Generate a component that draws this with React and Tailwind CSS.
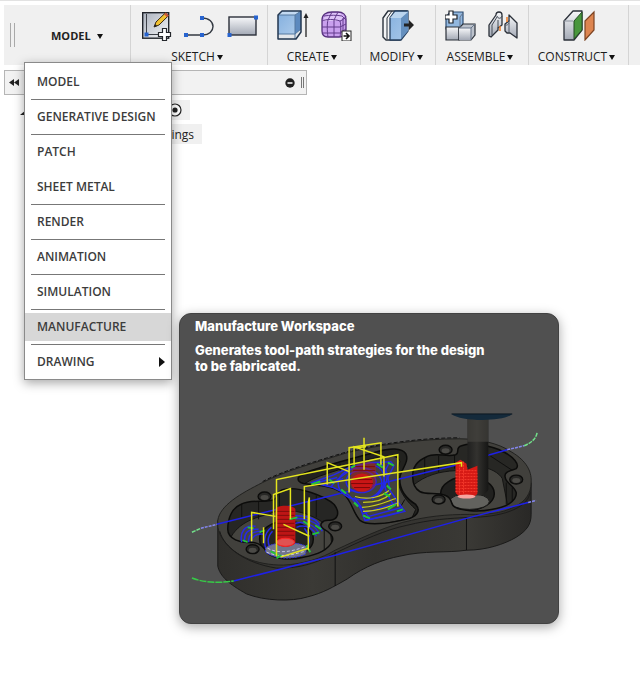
import React from "react";

const workspaces = [
  { name: "MODEL", line: true },
  { name: "GENERATIVE DESIGN", line: true },
  { name: "PATCH" },
  { name: "SHEET METAL", line: true },
  { name: "RENDER", line: true },
  { name: "ANIMATION", line: true },
  { name: "SIMULATION", line: true },
  { name: "MANUFACTURE", line: true, active: true },
  { name: "DRAWING", submenu: true },
];

function Icon({ children }) {
  return (
    <svg viewBox="0 0 32 32" className="h-8 w-8 shrink-0" aria-hidden="true">
      {children}
    </svg>
  );
}

function Gradients() {
  return (
    <svg className="absolute h-0 w-0" aria-hidden="true">
      <defs>
        <linearGradient id="steel" x1="0" y1="0" x2="0" y2="1">
          <stop offset="0" stopColor="#f7f8fa" />
          <stop offset="1" stopColor="#a3a9b5" />
        </linearGradient>
        <linearGradient id="sheet" x1="0" y1="0" x2="1" y2="1">
          <stop offset="0" stopColor="#aab1bd" />
          <stop offset="1" stopColor="#f4f5f7" />
        </linearGradient>
        <linearGradient id="sky" x1="0" y1="0" x2="1" y2="1">
          <stop offset="0" stopColor="#86b1df" />
          <stop offset="1" stopColor="#a9c8e9" />
        </linearGradient>
        <linearGradient id="side" x1="0" y1="0" x2="1" y2="0">
          <stop offset="0" stopColor="#2f2e2b" />
          <stop offset="0.3" stopColor="#3b3a36" />
          <stop offset="0.5" stopColor="#32312e" />
          <stop offset="0.8" stopColor="#3a3935" />
          <stop offset="1" stopColor="#292826" />
        </linearGradient>
        <linearGradient id="tool" x1="0" y1="0" x2="1" y2="0">
          <stop offset="0" stopColor="#20201f" />
          <stop offset="0.45" stopColor="#33322f" />
          <stop offset="1" stopColor="#161615" />
        </linearGradient>
      </defs>
    </svg>
  );
}

function NewSketchIcon() {
  return (
    <Icon>
      <rect x="2.7" y="3.7" width="26" height="25.5" fill="url(#sheet)" stroke="#20242b" strokeWidth="1.4" />
      <path d="M6.5 5v20.5H28" fill="none" stroke="#3b3f47" />
      <rect x="4.5" y="23.5" width="4" height="4" fill="#2563d0" />
      <path d="M14 18l2-5L25.5 3.8l3 2.8L19 16z" fill="#f2c230" stroke="#3a2a12" />
      <path d="M24 5.2l1.8-1.6 3 2.9-1.7 1.7z" fill="#c8583d" />
      <path d="M14 18l1.2-3 2 1.9z" fill="#222" />
      <path d="M22.5 19.5h4v4h4v4h-4v4h-4v-4h-4v-4h4z" fill="#fff" stroke="#24272c" strokeWidth="1.2" />
    </Icon>
  );
}

function LineIcon() {
  return (
    <Icon>
      <path d="M3 26h17c6 0 10-4 10-8.500S26 9 19 9" fill="none" stroke="#333942" strokeWidth="1.4" />
      <path d="M1 24h4v4H1zM17 24h4v4h-4zM17 7h4v4h-4z" fill="#2864cf" />
    </Icon>
  );
}

function RectangleIcon() {
  return (
    <Icon>
      <rect x="3" y="8" width="27" height="18" fill="url(#steel)" stroke="#2b3039" strokeWidth="1.4" />
      <path d="M1.500 24h4v4h-4zM28 6.500h4v4h-4z" fill="#2864cf" />
    </Icon>
  );
}

function ExtrudeIcon() {
  return (
    <Icon>
      <path d="M1 6l4-4h19v21l-5 8H1z" fill="#e3e6ea" />
      <path d="M1 6h17v19H1z" fill="url(#sky)" />
      <path d="M1 6l4-4h19l-6 4z" fill="#c3daf2" />
      <path d="M18 6l6-4v18l-6 5z" fill="#5c89be" />
      <path d="M1 25h17l6-5M1 6h17l6-4M18 6v24" fill="none" stroke="#55799f" />
      <path d="M1 30V6l4-4h19v21l-5 7z" fill="none" stroke="#22364f" strokeWidth="1.500" strokeLinejoin="round" />
      <path d="M29 28V8" stroke="#222" strokeWidth="1.300" />
      <path d="M29 4l2.500 5h-5z" fill="#222" />
    </Icon>
  );
}

function FormIcon() {
  return (
    <Icon>
      <path d="M2 11c0-5 4-8 10-8h6c5 0 8 3 8 7v11c0 5-3 7-7 7H8c-4 0-6-2-6-6z" fill="#c9a0ee" stroke="#55307c" strokeWidth="1.3" />
      <path d="M4 9c2-4 6-5 10-5h6l4 4-4 4H4z" fill="#dec4f8" />
      <path d="M2 12c4-2 13-2 18 0 3-1 5-3 6-5M2 18h18l6-3M2 24h18l6-4M8 28c-1-6-1-14 0-17l4-8M14 28V11l4-8M20 28c1-6 1-13 0-16M4 7c6-1 13-1 18 0l4 4M23 26V9" fill="none" stroke="#623b8c" />
      <rect x="22" y="22" width="9" height="10" fill="#fff" stroke="#252525" />
      <path d="M23.500 27h5M26 24l3 3-3 3" fill="none" stroke="#111" strokeWidth="1.600" />
    </Icon>
  );
}

function PressPullIcon() {
  return (
    <Icon>
      <path d="M1 9l5-7h19v8l-2 14-5 7H4l-3-3z" fill="#f4f5f6" stroke="#2a323c" strokeWidth="1.400" strokeLinejoin="round" />
      <path d="M5 30V9l5-7" fill="none" stroke="#2a323c" />
      <path d="M8 9l5-7h13v20l-7 9H8z" fill="url(#sky)" stroke="#27405f" strokeWidth="1.300" strokeLinejoin="round" />
      <path d="M19 9l7-7v20l-7 8z" fill="#648fbe" />
      <path d="M8 9l5-6h13l-7 6z" fill="#bad4ee" />
      <path d="M22 14.500h5V11l5 5-5 5v-3.500h-5z" fill="#222" />
    </Icon>
  );
}

function ComponentIcon() {
  return (
    <Icon>
      <path d="M1 8l4-5h13v14l-2 3H1z" fill="#91b7df" stroke="#2d4d73" strokeWidth="1.200" />
      <path d="M1 18h13v13H1z" fill="url(#steel)" stroke="#2b3039" strokeWidth="1.200" />
      <path d="M14 19l4-4h12v11l-4 5H14z" fill="#bcc2cc" stroke="#2b3039" strokeWidth="1.200" />
      <path d="M14 19h12v12H14z" fill="url(#steel)" />
      <path d="M14 19h12v12M26 19l4-4M15 8l3-4M15 8v10" fill="none" stroke="#66758a" />
      <path d="M4 2h4v4h4v4H8v4H4v-4H0V6h4z" fill="#fff" stroke="#20242a" strokeWidth="1.200" />
    </Icon>
  );
}

function JointIcon() {
  return (
    <Icon>
      <path d="M1 16l7-10c0-4 6-4 6 0v10l-4 3v2l-7 7-2-1z" fill="url(#steel)" stroke="#2b3039" strokeWidth="1.300" strokeLinejoin="round" />
      <path d="M4 26V16l5-8M9 7c1 3 4 3 5 0M10 19v-8" fill="none" stroke="#434a55" />
      <path d="M17 15l4-3V6l8 8v15l-7-5h-3l-2-2z" fill="url(#steel)" stroke="#2b3039" strokeWidth="1.300" strokeLinejoin="round" />
      <path d="M21 23V11M17 15c1 2 3 1 4-1" fill="none" stroke="#535b68" />
      <path d="M12 17v5M19 8v5" stroke="#ee7b24" strokeWidth="1.500" />
    </Icon>
  );
}

function PlaneIcon() {
  return (
    <Icon>
      <path d="M1 12l9-10h9v19l-8 10H1z" fill="url(#steel)" stroke="#2b3039" strokeWidth="1.300" strokeLinejoin="round" />
      <path d="M11 12l8-9v18l-8 9z" fill="#49973d" stroke="#244d24" />
      <path d="M1 12h9" stroke="#8b929d" />
      <path d="M22 12l9-9v18l-9 10z" fill="#dd8550" stroke="#7c4322" strokeWidth="1.200" />
    </Icon>
  );
}

const groups = [
  { name: "SKETCH", width: "w-[137px]", icons: [NewSketchIcon, LineIcon, RectangleIcon] },
  { name: "CREATE", width: "w-[93px]", icons: [ExtrudeIcon, FormIcon] },
  { name: "MODIFY", width: "w-[75px]", icons: [PressPullIcon] },
  { name: "ASSEMBLE", width: "w-[93px]", icons: [ComponentIcon, JointIcon] },
  { name: "CONSTRUCT", width: "w-[100px]", icons: [PlaneIcon] },
];

function Caret() {
  return (
    <svg viewBox="0 0 6 5" className="h-[5px] w-[6px]" aria-hidden="true">
      <path d="M0 0h6L3 5z" fill="#111" />
    </svg>
  );
}

function Toolbar() {
  return (
    <header className="ml-1 flex bg-[#f0f0f0]">
      <div className="flex w-[127px] shrink-0 items-center border-r border-[#d4d4d4] pl-1.5">
        <span className="h-6 w-[5px] border-x border-[#a9a9a9]" />
        <button type="button" aria-expanded="true" className="ml-9 flex items-center gap-1.5 pt-0.5 text-[11px] font-bold text-[#222]">
          MODEL <Caret />
        </button>
      </div>
      {groups.map((group) => (
        <section key={group.name} className={`${group.width} flex shrink-0 flex-col items-center border-r border-[#d4d4d4] pt-1`}>
          <div className="flex gap-[11px]">
            {group.icons.map((Glyph, i) => (
              <button key={i} type="button" aria-label={`${group.name} ${i + 1}`}>
                <Glyph />
              </button>
            ))}
          </div>
          <button type="button" className="mt-2 flex items-center gap-0.5 pr-1 text-[12px] leading-4 font-medium text-[#1c1c1c]">
            {group.name} <Caret />
          </button>
        </section>
      ))}
    </header>
  );
}

function Browser() {
  return (
    <aside className="mt-[5px] ml-1 w-[303px]">
      <div className="flex h-[25px] items-center border border-[#b5b5b5] bg-[#f2f2f2] pr-0.5 pl-1">
        <button type="button" aria-label="Collapse">
          <svg viewBox="0 0 10 7" className="h-[7px] w-[10px]">
            <path d="M5 0v7L0 3.500zM10 0v7L5 3.500z" fill="#222" />
          </svg>
        </button>
        <button type="button" aria-label="Minimize" className="ml-auto">
          <svg viewBox="0 0 10 10" className="h-[10px] w-[10px]">
            <circle cx="5" cy="5" r="4.700" fill="#222" />
            <path d="M2.500 5h5" stroke="#fff" strokeWidth="1.500" />
          </svg>
        </button>
        <span className="ml-1.5 h-[11px] w-[3px] border-x border-[#777]" />
      </div>
      <div className="mt-[5px] ml-4 flex h-5 items-center">
        <svg viewBox="0 0 6 6" className="mt-1.5 h-[6px] w-[6px]" aria-hidden="true">
          <path d="M6 0v5H0z" fill="#222" />
        </svg>
        <div className="ml-2 flex h-5 w-[156px] items-center justify-end bg-[#f0f0f0] pr-2">
          <svg viewBox="0 0 14 14" className="h-[14px] w-[14px]" aria-hidden="true">
            <circle cx="7" cy="7" r="6" fill="#fff" stroke="#222" strokeWidth="1.200" />
            <circle cx="7" cy="7" r="2.600" fill="#222" />
          </svg>
        </div>
      </div>
      <div className="mt-1 ml-[30px] flex h-5 w-[168px] items-center justify-end bg-[#f0f0f0] pt-0.5 pr-2 text-[12px] font-medium text-[#222]">
        ings
      </div>
    </aside>
  );
}

function WorkspaceMenu() {
  return (
    <nav className="absolute top-[62px] left-6 w-[148px] border border-[#8a8a8a] bg-white pt-[5px] pb-[3px] shadow-[0_3px_10px_rgba(0,0,0,0.35)]">
      {workspaces.map((item) => (
        <React.Fragment key={item.name}>
          <button
            type="button"
            className={`flex h-7 w-full items-center justify-between pr-1.5 pl-3 text-left text-[12px] font-semibold text-[#3c3c3c] ${item.active ? "bg-[#d7d7d7]" : ""}`}
          >
            {item.name}
            {item.submenu ? (
              <svg viewBox="0 0 6 10" className="h-[10px] w-[6px]" aria-hidden="true">
                <path d="M0 0l6 5-6 5z" fill="#111" />
              </svg>
            ) : null}
          </button>
          {item.submenu ? null : <div className={`mx-1.5 my-[3px] h-px ${item.line ? "bg-[#777]" : ""}`} />}
        </React.Fragment>
      ))}
    </nav>
  );
}

const holes = [
  [264, 497],
  [335, 527],
  [252, 550],
  [446, 450],
  [517, 480],
  [439, 500],
];

const leftPocket =
  "M227 530C227 518 232 508 240 505C250 500 260 503 270 501C280 500 274 492 283 490C298 486 325 497 334 505C340 513 338 520 330 521C322 520 317 526 324 530C330 533 334 538 332 542C328 551 315 556 303 558C287 562 272 559 266 553C263 547 258 543 250 543C240 544 227 540 227 530Z";
const middlePocket =
  "M298 478C301 473 320 468 340 462L377 452C390 448 402 448 406 454C410 462 401 470 400 478C399 492 408 500 416 505C422 512 416 518 406 520C390 524 367 527 360 521C353 514 352 502 344 495C334 486 317 486 303 484C299 483 297 481 298 478Z";
const rightPocket =
  "M413 478C412 466 420 460 427 457C436 452 447 458 456 455C461 453 455 448 462 446C472 442 493 446 504 452C514 457 521 465 517 469C512 471 504 472 506 478C506 483 515 486 517 493C518 502 506 508 492 510C478 513 461 511 456 508C450 506 454 499 446 496C438 492 427 496 420 492C415 489 413 484 413 478Z";

function ToolpathPicture() {
  return (
    <svg viewBox="179 400 380 220" className="block w-full" role="img" aria-label="Tool paths on a milled part">
      <clipPath id="leftClip"><path d={leftPocket} /></clipPath>
      <clipPath id="middleClip"><path d={middlePocket} /></clipPath>
      <clipPath id="rightClip"><path d={rightPocket} /></clipPath>

      {/* body */}
      <path
        d="M217 521V567C219 577 228 585 246 595C264 602 291 603 307 598C323 594 333 588 347 580C365 567 384 560 400 557C425 551 447 554 467 551C487 551 505 545 517 538C528 531 532 525 532 515V483L400 500Z"
        fill="url(#side)" stroke="#191918"
      />
      <path
        d="M217 521C219 506 240 494 262 483C285 471 315 463 347 453C380 445 420 439 460 439C480 439 500 444 510 451C525 459 533 470 532 483C532 494 526 502 516 507C501 515 487 515 470 515C446 515 427 517 403 523C379 530 361 539 335 551C322 559 303 565 283 566C254 566 237 556 228 547C220 539 216 531 217 521Z"
        fill="#41403c" stroke="#20201e"
      />
      <path d="M219 532C223 548 244 564 276 569C304 570 323 560 335 554C362 541 387 530 407 526C431 520 450 519 470 518C500 518 528 510 531 493" fill="none" stroke="#1b1b1a" />
      <path d="M335 553V587M467 518V551" stroke="#111" />
      <path d="M262 482C285 470 315 462 347 452C380 444 420 438 460 438" fill="none" stroke="#111" strokeDasharray="4 2" />

      {/* pockets */}
      <path d={leftPocket} fill="#262624" />
      <g clipPath="url(#leftClip)">
        <path d="M226 548C232 526 250 519 268 515C285 505 318 515 330 530L333 561H240Z" fill="#45443f" stroke="#151514" />
        <path d="M241 504V518M258 502V520M279 492V508M316 496V518M324 528V551" stroke="#11110f" />
        <ellipse cx="286" cy="540" rx="27" ry="18" fill="#232321" stroke="#0d0d0c" strokeWidth="1.500" />
      </g>
      <path d={leftPocket} fill="none" stroke="#0c0c0b" strokeWidth="1.500" />
      <path d={middlePocket} fill="#22221f" />
      <g clipPath="url(#middleClip)">
        <path d="M300 488C312 475 340 472 360 462C375 458 399 452 400 462C395 480 398 494 416 510L412 519L364 528L347 501C334 492 320 488 300 488Z" fill="#42413d" stroke="#11110f" />
        <path d="M340 464V472M405 500L401 507" stroke="#0d0d0c" />
      </g>
      <path d={middlePocket} fill="none" stroke="#0c0c0b" strokeWidth="1.500" />
      <path d={rightPocket} fill="#272724" />
      <g clipPath="url(#rightClip)">
        <path d="M412 487C426 475 440 472 456 471C470 462 496 467 503 479L510 514H440Z" fill="#45443f" stroke="#151514" />
        <path d="M425 458V475M439 456V473M455 455V469M507 483V505M513 488V503M480 449L518 474" stroke="#0f0f0e" />
        <ellipse cx="468" cy="494" rx="27" ry="17" fill="#21211f" stroke="#0d0d0c" strokeWidth="1.500" />
        <ellipse cx="470" cy="502" rx="20" ry="8" fill="#62625e" stroke="#1a1a19" />
      </g>
      <path d={rightPocket} fill="none" stroke="#0c0c0b" strokeWidth="1.500" />
      {holes.map(([cx, cy]) => (
        <g key={cx}>
          <ellipse cx={cx} cy={cy} rx="6.500" ry="4.500" fill="#282826" stroke="#0c0c0b" strokeWidth="1.400" />
          <ellipse cx={cx} cy={cy + 1} rx="4" ry="2.500" fill="#4b4a46" />
        </g>
      ))}

      {/* long linking moves */}
      <g fill="none" strokeWidth="1.500">
        <path d="M216 525L340 494L462 464M487 456L508 450M233 582L335 556L467 519L529 503" stroke="#1e20e8" />
        <path d="M200 529L216 525M508 450L525 446M529 503L537 501" stroke="#8587ef" strokeDasharray="3 1" />
        <path d="M191 533L200 529M525 446C532 443 537 439 538 433" stroke="#72e08a" strokeDasharray="4 1" />
        <path d="M191 579C204 584 219 584 233 582" stroke="#37c947" strokeDasharray="7 1" />
      </g>

      {/* middle pocket cuts */}
      <g fill="none" stroke="#2428ea" strokeWidth="1.500">
        <path d="M312 483L334 475L351 467L371 463L391 462L394 466L388 478L390 491L400 505L405 512L385 517L365 521L360 508L348 495L333 488Z" />
        <path d="M317 483L337 478M323 486L343 479M331 487C335 481 342 476 348 472M375 466C387 470 387 486 377 496" />
        <path d="M381 464C392 474 388 488 372 500M389 464C382 475 382 491 395 507M354 498L369 518M363 514L398 503M365 518L402 508M366 521L399 513" />
        <ellipse cx="361" cy="482" rx="15" ry="11" />
        <ellipse cx="360" cy="484" rx="22" ry="16" />
      </g>
      <path d="M363 503C377 503 386 499 391 494M362 508C379 507 389 501 396 499M363 512C378 512 390 507 397 504M355 497C369 501 382 497 389 491" fill="none" stroke="#c9cc1c" strokeWidth="1.200" />
      <path d="M352 469C354 464 376 459 376 466V483C374 496 350 496 350 483Z" fill="#c41616" fillOpacity="0.45" />
      <ellipse cx="362" cy="483" rx="11" ry="9" fill="#c91616" />
      <path d="M352 480H372M351 484H373M354 488H370M353 467H375M353 471H375" stroke="#7e0909" strokeWidth="1" />
      <path d="M311 485l9-3M329 480l5 4M351 468l4-2M377 464l6 4M388 463l6 3M341 490l5 4M354 503l4 4M363 516l7 3M388 510l8-5M397 512l6-2M387 486l4 4M384 494l6 3" stroke="#23c538" strokeWidth="2" />

      {/* left pocket cuts */}
      <g fill="none" stroke="#2629e5" strokeWidth="1.500">
        <path d="M241 543C239 533 244 525 255 527M244 543C243 534 247 529 258 530M248 543C247 536 251 532 261 532M251 542C251 538 255 534 263 535" />
        <path d="M288 521C302 516 319 523 322 532M292 525C303 520 316 526 319 535M296 528C306 524 314 530 316 537M286 517C302 515 315 518 319 525" />
        <path d="M268 553C261 545 264 533 271 528M273 552C265 545 267 537 272 532M304 529C314 542 308 551 294 556" />
      </g>
      <path d="M265 549C271 542 300 542 307 548L305 555C294 560 276 561 265 553Z" fill="#71748c" stroke="#3437dd" strokeDasharray="2 1" />
      <path d="M267 549C280 556 295 551 306 547M266 553C283 560 296 554 305 552" fill="none" stroke="#c7cae5" strokeDasharray="3 2" />
      <path d="M275 510C275 505 294 505 295 510V543C293 549 277 549 275 543Z" fill="#bd1515" />
      <path d="M276 512H294M276 516H294M276 520H294M276 524H294M276 528H294M276 532H294M276 536H294M276 540H294" stroke="#7e0d0d" />
      <ellipse cx="285" cy="543" rx="9" ry="4" fill="#e05252" stroke="#ff2525" />
      <path d="M247 528l6 1M259 533l5-2M242 541l5 2M289 520l8-2M303 522l6 4M315 526l6 4M312 535l7-2M306 546l4 7M270 552l8 4M276 559l5-3" stroke="#22c637" strokeWidth="1.800" />

      {/* cutter */}
      <path d="M468 419H489V490C486 498 471 498 468 490Z" fill="url(#tool)" />
      <path d="M468 419H489V442H468Z" fill="#464540" fillOpacity="0.65" />
      <path d="M452 414H513C505 422 461 422 452 414Z" fill="#142a3b" />
      <path d="M452 414H513" stroke="#0c1720" />
      <path d="M456 463L461 460L467 464L468 470L478 466V494C475 500 459 499 456 493Z" fill="#d61a15" />
      <path d="M457 471H478M456 474H478M456 477H478M456 480H478M456 483H478M456 486H478M456 489H478M456 492H478M460 462V496M464 462V495" stroke="#f43a2d" strokeDasharray="2 1" />
      <ellipse cx="467" cy="497" rx="9" ry="2" fill="#f7a39f" />

      {/* rapid moves */}
      <g fill="none" stroke="#e4e51e" strokeWidth="1.500">
        <path d="M276 557V480L398 455V507" />
        <path d="M304 520V487L462 463V467" />
        <path d="M327 485V463L349 472" />
        <path d="M349 493V448L381 443V465" />
        <path d="M354 465V447L384 457V477" />
        <path d="M364 438V470" />
        <path d="M251 542V513L275 517" />
        <path d="M273 530V495L290 489V520" />
        <path d="M308 551V503L309 498V528" />
        <path d="M283 525L309 537M263 528V544M280 558L308 549M354 448L366 447" />
      </g>
    </svg>
  );
}

function WorkspaceTooltip() {
  return (
    <div role="tooltip" className="absolute top-[313px] left-[179px] w-[380px] rounded-xl border border-[#424242] bg-[#505050] pt-1 pb-1 font-['Inter',sans-serif] text-[13px] leading-4 font-extrabold text-white shadow-[0_3px_12px_rgba(0,0,0,0.35)]">
      <h2 className="px-[15px]">Manufacture Workspace</h2>
      <p className="mt-2 px-[15px]">
        Generates tool-path strategies for the design
        <br />
        to be fabricated.
      </p>
      <div className="mt-[26px]">
        <ToolpathPicture />
      </div>
    </div>
  );
}

export default function App() {
  return (
    <div className="relative min-h-screen overflow-hidden bg-white font-['Open_Sans',sans-serif]">
      <Gradients />
      <div className="mb-1 h-px bg-[#e2e2e2]" />
      <Toolbar />
      <Browser />
      <WorkspaceMenu />
      <WorkspaceTooltip />
    </div>
  );
}
